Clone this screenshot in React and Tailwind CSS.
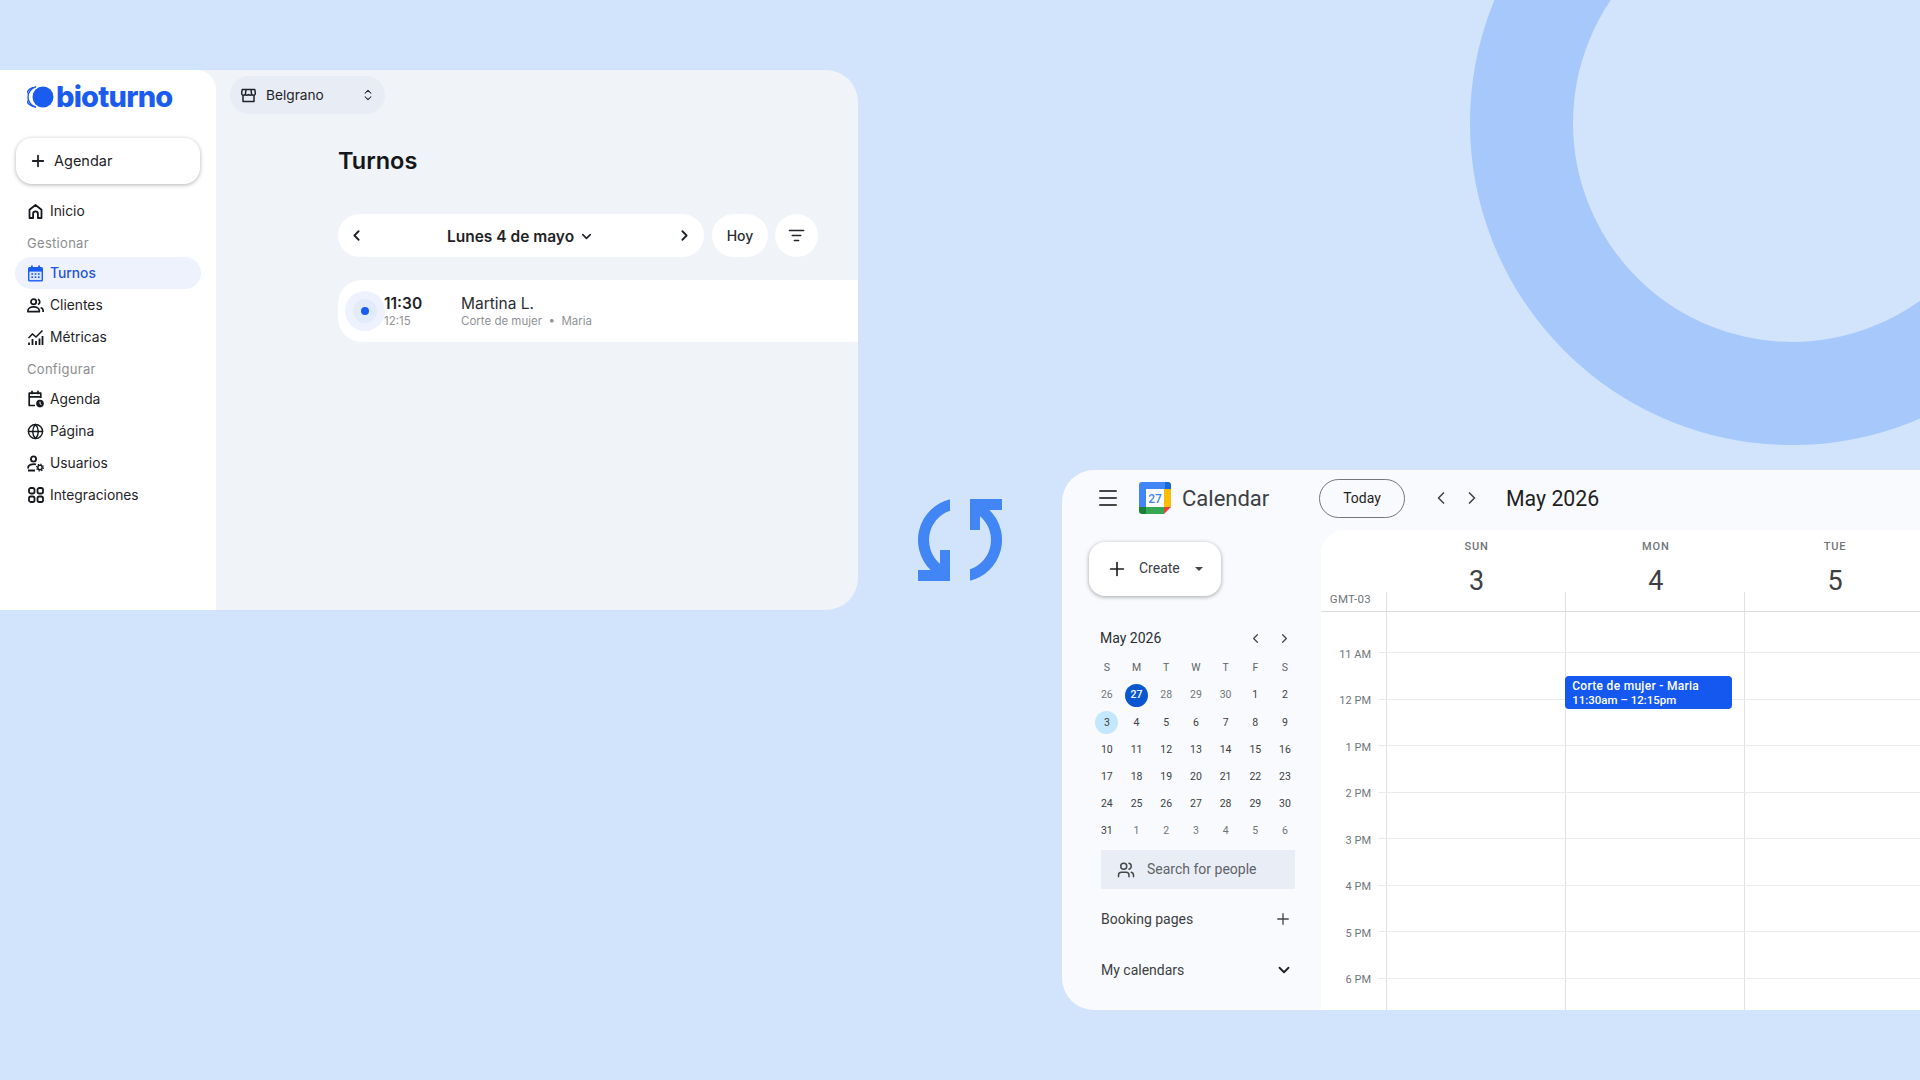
import { Plus, ChevronLeft, ChevronRight, ChevronDown, ChevronsUpDown, ListFilter, Globe, Menu, Users } from 'lucide-react';

const BioLogo = () => (
  <svg width="28" height="22" viewBox="0 0 28 22" className="shrink-0">
    <path d="M6 1.5A10 10 0 0 0 6 20.5" fill="none" stroke="#1a5cf0" strokeWidth="1.4" />
    <path d="M9 .8A10.5 10.5 0 0 0 9 21.2" fill="none" stroke="#1a5cf0" strokeWidth="1.4" />
    <circle cx="16" cy="11" r="10.5" fill="#1a5cf0" />
  </svg>
);

const StoreIcon = () => (
  <svg width="15" height="15" viewBox="0 0 15 15" fill="none" stroke="#1f2328" strokeWidth="1.5" strokeLinejoin="round">
    <path d="M1.2 1.5h12.6l.6 4a2 2 0 0 1-3.5 1 2.4 2.4 0 0 1-3.4 0 2.4 2.4 0 0 1-3.4 0 2 2 0 0 1-3.5-1z" />
    <path d="M2 7v6.5h11V7M5 1.5 4.4 6.5M10 1.5l.6 5" />
  </svg>
);

const HomeIcon = () => (
  <svg width="17" height="17" viewBox="0 0 17 17" fill="none" stroke="#15181c" strokeWidth="1.8" strokeLinejoin="round">
    <path d="M2.5 15V6.8L8.5 2l6 4.8V15h-3.6v-4.2a2.4 2.4 0 0 0-4.8 0V15z" />
  </svg>
);

const TurnosIcon = () => (
  <svg width="17" height="17" viewBox="0 0 17 17">
    <rect x="4" y=".5" width="1.8" height="3" fill="#1a5cf0" />
    <rect x="11.2" y=".5" width="1.8" height="3" fill="#1a5cf0" />
    <rect x="1" y="2" width="15" height="14.5" rx="1.6" fill="#1a5cf0" />
    <rect x="2.4" y="6.6" width="12.2" height="8.5" fill="#d9e5fd" />
    <g fill="#1a5cf0">
      <rect x="4.4" y="8.2" width="1.6" height="1.6" />
      <rect x="7.7" y="8.2" width="1.6" height="1.6" />
      <rect x="11" y="8.2" width="1.6" height="1.6" />
      <rect x="4.4" y="11.4" width="1.6" height="1.6" />
      <rect x="7.7" y="11.4" width="1.6" height="1.6" />
      <rect x="11" y="11.4" width="1.6" height="1.6" />
    </g>
  </svg>
);

const ClientesIcon = () => (
  <svg width="18" height="17" viewBox="0 0 18 17" fill="none" stroke="#15181c" strokeWidth="1.8">
    <circle cx="7" cy="4.6" r="2.8" />
    <path d="M1 15v-1.2C1 11.5 3.7 10 7 10s6 1.5 6 3.8V15z" strokeLinejoin="round" />
    <path d="M11.5 2a2.8 2.8 0 0 1 0 5.4M14.5 10.6c1.5.6 2.6 1.7 2.6 3.2V15.5" />
  </svg>
);

const MetricasIcon = () => (
  <svg width="17" height="17" viewBox="0 0 17 17" fill="none" stroke="#15181c">
    <path d="M1.5 9l4-4 3.5 3 6.5-6.5" strokeWidth="1.5" />
    <path d="M2 16v-2.5M5.5 16v-6M9 16v-4M12.5 16v-6.5M15.5 16v-9" strokeWidth="1.8" />
  </svg>
);

const AgendaIcon = () => (
  <svg width="17" height="18" viewBox="0 0 17 18" fill="none" stroke="#15181c" strokeWidth="1.7">
    <path d="M8 15.5H2.2V3.2h11.6V8" strokeLinejoin="round" />
    <path d="M2.2 6.8h11.6M5 .8v3.4M11 .8v3.4" />
    <circle cx="13" cy="13.6" r="3.8" fill="#15181c" stroke="none" />
    <path d="M13 11.6v2.2l1.4.9" stroke="#fff" strokeWidth="1" />
  </svg>
);

const UsuariosIcon = () => (
  <svg width="17" height="17" viewBox="0 0 17 17" fill="none" stroke="#15181c" strokeWidth="1.8">
    <circle cx="6.5" cy="4" r="2.6" />
    <path d="M9 9.3C5.5 8.6 1.2 10 1.2 12.3c0 .8.3 1.2.3 1.2M1 15.5h7" />
    <circle cx="13" cy="12.5" r="2.2" strokeWidth="1.5" />
    <circle cx="13" cy="12.5" r="3.4" strokeWidth="1.2" strokeDasharray="1.3 1.37" />
  </svg>
);

const IntegracionesIcon = () => (
  <svg width="16" height="16" viewBox="0 0 16 16" fill="none" stroke="#15181c" strokeWidth="1.8">
    <rect x="1" y="1" width="5.5" height="5.5" rx="1.8" />
    <rect x="9.5" y="1" width="5.5" height="5.5" rx="1.8" />
    <rect x="1" y="9.5" width="5.5" height="5.5" rx="1.8" />
    <rect x="9.5" y="9.5" width="5.5" height="5.5" rx="1.8" />
  </svg>
);

const SyncIcon = () => (
  <svg width="84" height="84" viewBox="918 498 84 84" fill="#4285f4">
    <path d="M950 499.2A42 42 0 0 0 930.6 570L918 570L918 581L950 581L950 550L940 550L940 563.7A31 31 0 0 1 950 510.7Z" />
    <path transform="rotate(180 960 540)" d="M950 499.2A42 42 0 0 0 930.6 570L918 570L918 581L950 581L950 550L940 550L940 563.7A31 31 0 0 1 950 510.7Z" />
  </svg>
);

const GCalLogo = () => (
  <svg width="32" height="32" viewBox="0 0 32 32" className="shrink-0">
    <path d="M3 0h23v7H7v18H0V3a3 3 0 0 1 3-3z" fill="#4285f4" />
    <path d="M26 0h3a3 3 0 0 1 3 3v4h-6z" fill="#1967d2" />
    <rect x="7" y="7" width="18" height="18" fill="#fff" />
    <rect x="25" y="7" width="7" height="18" fill="#fbbc04" />
    <rect x="7" y="25" width="18" height="7" fill="#34a853" />
    <path d="M0 25h7v7H3a3 3 0 0 1-3-3z" fill="#188038" />
    <path d="M25 25h7l-7 7z" fill="#ea4335" />
    <text x="16" y="21" textAnchor="middle" fontSize="12" fontWeight="500" fill="#4285f4" fontFamily="Roboto, sans-serif">27</text>
  </svg>
);

const BioSidebar = () => {
  const items = [
    { label: 'Inicio', icon: <HomeIcon /> },
    { heading: 'Gestionar' },
    { label: 'Turnos', icon: <TurnosIcon />, active: true },
    { label: 'Clientes', icon: <ClientesIcon /> },
    { label: 'Métricas', icon: <MetricasIcon /> },
    { heading: 'Configurar' },
    { label: 'Agenda', icon: <AgendaIcon /> },
    { label: 'Página', icon: <Globe size={17} strokeWidth={2} color="#15181c" /> },
    { label: 'Usuarios', icon: <UsuariosIcon /> },
    { label: 'Integraciones', icon: <IntegracionesIcon /> },
  ];

  return (
    <div className="w-[216px] shrink-0 bg-white rounded-tr-[20px] px-[15px]">
      <div className="h-[53px] flex items-center gap-[1px] pl-[12px]">
        <BioLogo />
        <span className="text-[29px] font-extrabold tracking-[-0.8px] text-[#1a5cf0] leading-none">bioturno</span>
      </div>
      <button className="mt-[15px] ml-px w-[184px] h-[46px] bg-white rounded-[16px] flex items-center gap-[7px] pl-[13px] text-[14.5px] text-[#1f2328] shadow-[0_1px_4px_rgba(0,0,0,0.3)]">
        <Plus size={18} strokeWidth={2.4} />
        Agendar
      </button>
      <div className="mt-[11px]">
        {items.map(item => item.heading ? (
          <div key={item.heading} className="h-[30px] pl-[12px] pt-[4px] flex items-center text-[13px] tracking-[0.3px] text-[#8b8d90]">{item.heading}</div>
        ) : (
          <div key={item.label} className={`h-[32px] pl-[12px] flex items-center gap-[6px] text-[13.8px] rounded-full ${item.active ? 'bg-[#edf2fd] text-[#1f55d8] font-medium' : 'text-[#1f2328]'}`}>
            <span className="w-[17px] flex justify-center shrink-0">{item.icon}</span>
            {item.label}
          </div>
        ))}
      </div>
    </div>
  );
};

const BioMain = () => (
  <div className="flex-1 min-w-0 pt-[6px]">
    <div className="ml-[14px] w-[155px] h-[38px] rounded-full bg-[#e8ecf5] flex items-center pl-[11px] pr-[10px] text-[13.7px] text-[#1f2328]">
      <StoreIcon />
      <span className="ml-[10px] flex-1">Belgrano</span>
      <ChevronsUpDown size={14} strokeWidth={1.8} />
    </div>
    <div className="pl-[122px]">
      <h1 className="mt-[31px] h-[32px] flex items-center text-[23.5px] font-semibold text-[#14171a]">Turnos</h1>
      <div className="mt-[37px] flex gap-[8px]">
        <div className="w-[366px] h-[43px] rounded-full bg-white flex items-center justify-between pl-[10px] pr-[11px] text-[#1f2328]">
          <ChevronLeft size={17} strokeWidth={2.6} />
          <span className="flex items-center gap-[5px] pt-[2px] text-[15.5px] font-semibold">Lunes 4 de mayo <ChevronDown size={15} strokeWidth={2.6} /></span>
          <ChevronRight size={17} strokeWidth={2.6} />
        </div>
        <div className="w-[56px] h-[43px] rounded-full bg-white flex items-center justify-center text-[14px] font-medium text-[#2a2e33]">Hoy</div>
        <div className="-ml-px w-[43px] h-[43px] rounded-full bg-white flex items-center justify-center text-[#1f2328]"><ListFilter size={17} strokeWidth={2.2} /></div>
      </div>
      <div className="mt-[23px] h-[62px] rounded-l-[24px] bg-white flex items-center pl-[7px]">
        <div className="w-[40px] h-[40px] rounded-full bg-[#edf2fe] flex items-center justify-center shrink-0">
          <div className="w-[24px] h-[24px] rounded-full bg-[#e2eafb] flex items-center justify-center">
            <div className="w-[8px] h-[8px] rounded-full bg-[#1a5cf0]" />
          </div>
        </div>
        <div className="w-[77px] shrink-0 -ml-[1px]">
          <div className="text-[15.5px] font-semibold leading-[21px] text-[#1f2328]">11:30</div>
          <div className="text-[11.5px] leading-[15px] text-[#8f9296]">12:15</div>
        </div>
        <div>
          <div className="text-[15.5px] leading-[21px] text-[#2a2e33]">Martina L.</div>
          <div className="text-[11.5px] leading-[15px] text-[#8f9296]">Corte de mujer &nbsp;•&nbsp; Maria</div>
        </div>
      </div>
    </div>
  </div>
);

const miniDays = [
  26, 27, 28, 29, 30, 1, 2,
  3, 4, 5, 6, 7, 8, 9,
  10, 11, 12, 13, 14, 15, 16,
  17, 18, 19, 20, 21, 22, 23,
  24, 25, 26, 27, 28, 29, 30,
  31, 1, 2, 3, 4, 5, 6,
];

const MiniCalendar = () => (
  <div className="ml-[30px]">
    <div className="mt-[32px] h-[20px] w-[208px] pl-[8px] pr-[8px] flex items-center text-[14px]">
      <span className="flex-1 font-[450] text-[#2b2f33]">May 2026</span>
      <ChevronLeft size={15} strokeWidth={2} className="mr-[14px] text-[#444746]" />
      <ChevronRight size={15} strokeWidth={2} className="text-[#444746]" />
    </div>
    <div className="mt-[6.5px] grid grid-cols-[repeat(7,29.7px)] auto-rows-[27.2px] text-[10.5px] text-center">
      {['S', 'M', 'T', 'W', 'T', 'F', 'S'].map((d, i) => (
        <div key={i} className="flex items-center justify-center text-[#5f6368]">{d}</div>
      ))}
      {miniDays.map((d, i) => {
        const dim = i < 5 || i > 35;
        let cls = dim ? 'text-[#70757a]' : 'text-[#3c4043]';
        if (i === 1) cls = 'bg-[#0b57d0] text-white font-medium';
        if (i === 7) cls = 'bg-[#c2e7ff] text-[#3c4043]';
        return (
          <div key={i} className="flex items-center justify-center">
            <span className={`w-[23px] h-[23px] rounded-full flex items-center justify-center ${cls}`}>{d}</span>
          </div>
        );
      })}
    </div>
  </div>
);

const CalSidebar = () => (
  <div className="w-[259px] shrink-0">
    <div className="pt-[12px] pl-[27px]">
      <div className="w-[132px] h-[54px] rounded-[16px] bg-white flex items-center pl-[17px] text-[14px] font-[450] text-[#3c4043] shadow-[0_1px_4px_rgba(0,0,0,0.35)]">
        <Plus size={22} strokeWidth={1.8} color="#1f1f1f" />
        <span className="ml-[11px] -mt-[1px]">Create</span>
        <span className="ml-[15px] w-0 h-0 border-x-[4px] border-x-transparent border-t-[4px] border-t-[#444746]" />
      </div>
    </div>
    <MiniCalendar />
    <div className="mt-[5.5px] ml-[39px] w-[194px] h-[39px] bg-[#e9eef6] flex items-center pl-[16px] text-[14px] text-[#5f6368]">
      <Users size={18} strokeWidth={2} color="#444746" />
      <span className="ml-[12px]">Search for people</span>
    </div>
    <div className="mt-[20px] ml-[39px] w-[194px] h-[20px] flex items-center justify-between pr-[3px] text-[14px] font-[450] text-[#3c4043]">
      Booking pages
      <Plus size={18} strokeWidth={1.8} color="#444746" />
    </div>
    <div className="mt-[31px] ml-[39px] w-[194px] h-[20px] flex items-center justify-between pr-[2px] text-[14px] font-[450] text-[#3c4043]">
      My calendars
      <ChevronDown size={18} strokeWidth={2.4} color="#1f1f1f" />
    </div>
  </div>
);

const hours = [
  { label: '11 AM', h: 'h-[46.5px]' },
  { label: '12 PM', h: 'h-[46.5px]' },
  { label: '1 PM', h: 'h-[46.5px]' },
  { label: '2 PM', h: 'h-[46.5px]' },
  { label: '3 PM', h: 'h-[46.5px]' },
  { label: '4 PM', h: 'h-[46.5px]' },
  { label: '5 PM', h: 'h-[46.5px]' },
  { label: '6 PM', h: 'h-[33px]' },
];

const days = [
  { name: 'SUN', num: 3 },
  { name: 'MON', num: 4 },
  { name: 'TUE', num: 5 },
];

const WeekGrid = () => (
  <div className="flex-1 min-w-0 bg-white rounded-tl-[24px] overflow-hidden">
    <div className="h-[62px] flex pl-[66px]">
      {days.map(d => (
        <div key={d.name} className="w-[179.2px] shrink-0 flex flex-col items-center pt-[9px]">
          <span className="h-[16px] flex items-center text-[11px] font-medium tracking-[0.8px] text-[#70757a]">{d.name}</span>
          <span className="mt-[10px] text-[27px] leading-[32px] text-[#3c4043]">{d.num}</span>
        </div>
      ))}
    </div>
    <div className="h-[20px] flex border-b border-[#dadce0]">
      <div className="w-[50px] shrink-0 text-right text-[11.5px] tracking-[0.3px] leading-[14px] text-[#70757a]">GMT-03</div>
      <div className="w-[15px] shrink-0" />
      {days.map(d => <div key={d.name} className="w-[179.2px] shrink-0 border-l border-[#e0e2e6]" />)}
    </div>
    <div className="flex">
      <div className="w-[50px] shrink-0 pt-[19.5px]">
        {hours.map(h => (
          <div key={h.label} className="h-[46.5px] flex items-center justify-end text-[11px] text-[#70757a]">{h.label}</div>
        ))}
      </div>
      <div className="w-[7px] shrink-0" />
      <div className="flex-1">
        <div className="h-[40px] flex pl-[8px]">
          {days.map(d => <div key={d.name} className="w-[179.2px] shrink-0 border-l border-[#e0e2e6]" />)}
        </div>
        {hours.map((h, i) => (
          <div key={h.label} className={`${h.h} flex pl-[8px] border-t border-[#e8eaed]`}>
            {days.map(d => (
              <div key={d.name} className="relative w-[179.2px] shrink-0 border-l border-[#e0e2e6]">
                {i === 0 && d.num === 4 && (
                  <div className="absolute z-10 -left-px top-[23px] w-[167px] h-[33px] rounded-[4px] bg-[#1558f0] text-white font-medium pl-[7px] pt-[3px]">
                    <div className="text-[12px] leading-[14px] tracking-[0.3px]">Corte de mujer - Maria</div>
                    <div className="text-[11.5px] leading-[14px]">11:30am – 12:15pm</div>
                  </div>
                )}
              </div>
            ))}
          </div>
        ))}
      </div>
    </div>
  </div>
);

const CalendarPanel = () => (
  <div className="flex-1 min-w-0 h-[540px] mt-[470px] bg-[#f8fafd] rounded-l-[32px] overflow-hidden flex flex-col font-['Roboto',sans-serif]">
    <div className="h-[60px] shrink-0 flex items-center pb-[4px]">
      <Menu size={24} strokeWidth={2} color="#444746" className="ml-[34px]" />
      <span className="ml-[19px]"><GCalLogo /></span>
      <span className="ml-[11px] w-[137px] text-[22px] text-[#3c4043]">Calendar</span>
      <div className="w-[86px] h-[39px] rounded-full border border-[#747775] flex items-center justify-center text-[14px] font-[450] text-[#1f1f1f]">Today</div>
      <ChevronLeft size={20} strokeWidth={2} color="#444746" className="ml-[26px]" />
      <ChevronRight size={20} strokeWidth={2} color="#444746" className="ml-[11px]" />
      <span className="ml-[24px] pt-[1px] text-[21.3px] text-[#1f1f1f]">May 2026</span>
    </div>
    <div className="flex-1 flex min-h-0">
      <CalSidebar />
      <WeekGrid />
    </div>
  </div>
);

export default function App() {
  return (
    <div className="relative w-[1920px] h-[1080px] overflow-hidden bg-[#d2e3fc] font-['Inter',sans-serif] flex items-start">
      <div className="absolute left-[1470px] -top-[199px] w-[644px] h-[644px] rounded-full border-[103px] border-[#a6c8fa]" />
      <div className="relative w-[858px] h-[540px] shrink-0 mt-[70px] bg-[#f0f3f8] rounded-r-[32px] overflow-hidden flex">
        <BioSidebar />
        <BioMain />
      </div>
      <div className="relative w-[204px] shrink-0 mt-[498px] flex justify-center">
        <SyncIcon />
      </div>
      <div className="relative flex-1 min-w-0 flex">
        <CalendarPanel />
      </div>
    </div>
  );
}
